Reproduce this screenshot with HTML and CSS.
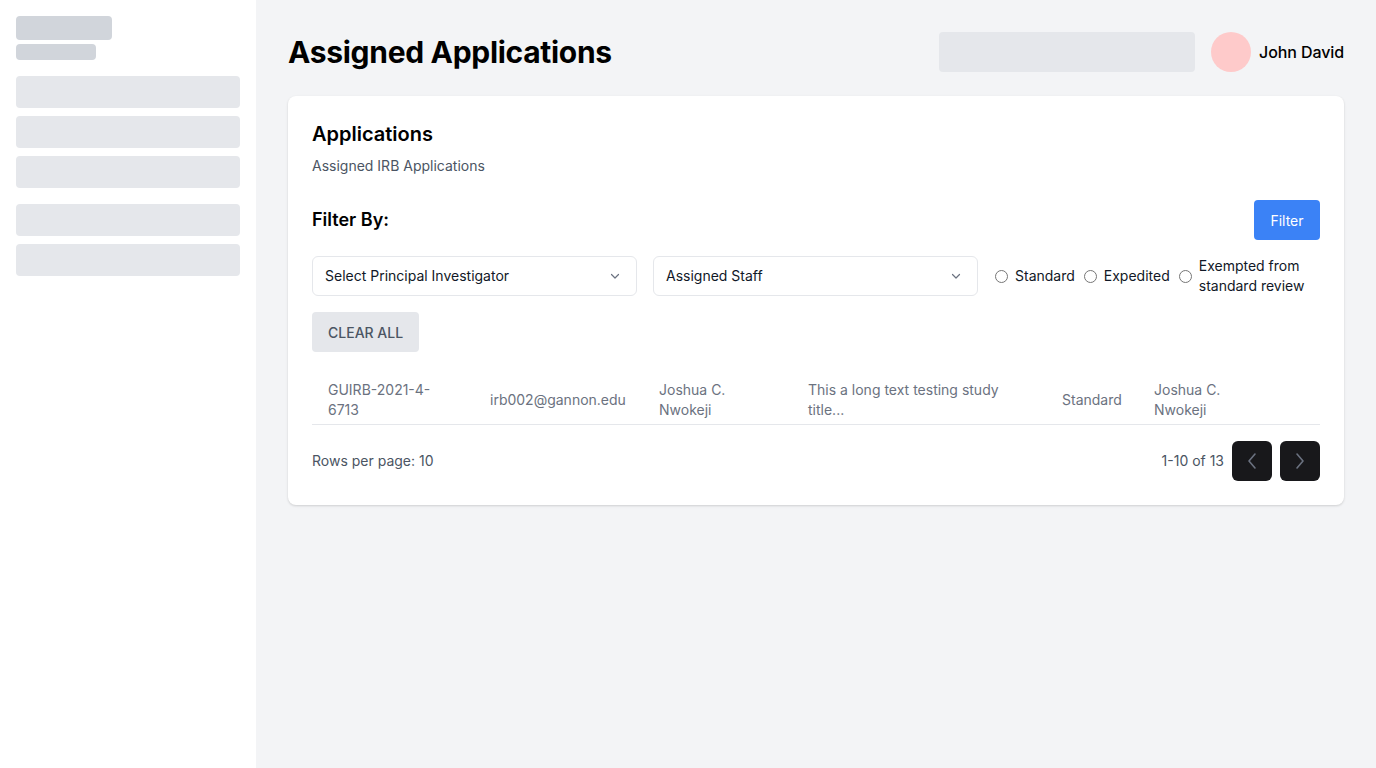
FILE: index.html
```html
<!DOCTYPE html>
<html lang="en">
<head>
<meta charset="utf-8">
<title>Assigned Applications</title>
<link rel="stylesheet" href="styles.css">
</head>
<body>
<div class="app">
  <aside class="sidebar">
    <div class="logo-main"></div>
    <div class="logo-sub"></div>
    <nav class="nav">
      <div class="nav-group">
        <div class="nav-item"></div>
        <div class="nav-item"></div>
        <div class="nav-item"></div>
      </div>
      <div class="nav-group">
        <div class="nav-item"></div>
        <div class="nav-item"></div>
      </div>
    </nav>
  </aside>
  <main class="main">
    <header class="topbar">
      <h1 class="page-title">Assigned Applications</h1>
      <div class="topbar-right">
        <div class="search-skel"></div>
        <div class="user">
          <div class="avatar"></div>
          <span class="user-name">John David</span>
        </div>
      </div>
    </header>
    <section class="card">
      <h2 class="card-title">Applications</h2>
      <p class="card-sub">Assigned IRB Applications</p>
      <div class="filter-head">
        <h3 class="filter-title">Filter By:</h3>
        <button class="btn-primary">Filter</button>
      </div>
      <div class="filter-row">
        <div class="select">
          <span>Select Principal Investigator</span>
          <svg class="chev" width="12" height="12" viewBox="0 0 12 12"><path d="M2.5 4.5 6 8l3.5-3.5" fill="none" stroke="#6b7280" stroke-width="1.2" stroke-linecap="round" stroke-linejoin="round"/></svg>
        </div>
        <div class="select">
          <span>Assigned Staff</span>
          <svg class="chev" width="12" height="12" viewBox="0 0 12 12"><path d="M2.5 4.5 6 8l3.5-3.5" fill="none" stroke="#6b7280" stroke-width="1.2" stroke-linecap="round" stroke-linejoin="round"/></svg>
        </div>
        <div class="radios">
          <label class="radio"><span class="radio-dot"></span><span>Standard</span></label>
          <label class="radio"><span class="radio-dot"></span><span>Expedited</span></label>
          <label class="radio"><span class="radio-dot"></span><span class="radio-long">Exempted from standard review</span></label>
        </div>
      </div>
      <button class="btn-clear">CLEAR ALL</button>
      <div class="table">
        <div class="row">
          <div class="cell c1"><span class="w1">GUIRB-2021-4-6713</span></div>
          <div class="cell c2"><span>irb002@gannon.edu</span></div>
          <div class="cell c3"><span class="wn">Joshua C. Nwokeji</span></div>
          <div class="cell c4"><span class="w4">This a long text testing study title...</span></div>
          <div class="cell c5"><span>Standard</span></div>
          <div class="cell c6"><span class="wn">Joshua C. Nwokeji</span></div>
        </div>
      </div>
      <div class="pager">
        <span class="rows-pp">Rows per page: 10</span>
        <div class="pager-right">
          <span class="range">1-10 of 13</span>
          <button class="pg-btn" aria-label="Previous">
            <svg width="12" height="18" viewBox="0 0 12 18"><path d="M9 2 3 9l6 7" fill="none" stroke="#6b7280" stroke-width="1.6" stroke-linecap="round" stroke-linejoin="round"/></svg>
          </button>
          <button class="pg-btn" aria-label="Next">
            <svg width="12" height="18" viewBox="0 0 12 18"><path d="M3 2l6 7-6 7" fill="none" stroke="#6b7280" stroke-width="1.6" stroke-linecap="round" stroke-linejoin="round"/></svg>
          </button>
        </div>
      </div>
    </section>
  </main>
</div>
</body>
</html>
```
FILE: styles.css
```css
* { box-sizing: border-box; }
html, body { margin: 0; padding: 0; }
body {
  font-family: Inter, "Noto Sans", "Liberation Sans", sans-serif;
  color: #111827;
  background: #f3f4f6;
}
.app { display: flex; min-height: 768px; }

.sidebar {
  width: 256px;
  flex-shrink: 0;
  background: #ffffff;
  padding: 16px;
  display: flex;
  flex-direction: column;
}
.logo-main { width: 96px; height: 24px; background: #d1d5db; border-radius: 4px; }
.logo-sub { width: 80px; height: 16px; background: #d1d5db; border-radius: 4px; margin-top: 4px; }
.nav { margin-top: 16px; display: flex; flex-direction: column; gap: 16px; }
.nav-group { display: flex; flex-direction: column; gap: 8px; }
.nav-item { height: 32px; background: #e5e7eb; border-radius: 4px; }

.main { flex: 1; padding: 32px; min-width: 0; }
.topbar { display: flex; align-items: center; justify-content: space-between; height: 40px; }
.page-title { margin: 0; font-size: 30px; font-weight: 700; line-height: 36px; color: #000; letter-spacing: -0.3px; }
.topbar-right { display: flex; align-items: center; gap: 16px; }
.search-skel { width: 256px; height: 40px; background: #e5e7eb; border-radius: 4px; }
.user { display: flex; align-items: center; gap: 8px; }
.avatar { width: 40px; height: 40px; border-radius: 50%; background: #fecaca; }
.user-name { font-size: 16px; font-weight: 500; color: #000; letter-spacing: -0.1px; }

.card {
  margin-top: 24px;
  background: #fff;
  border-radius: 8px;
  box-shadow: 0 1px 3px rgba(0,0,0,0.1), 0 1px 2px rgba(0,0,0,0.06);
  padding: 24px;
}
.card-title { margin: 0; font-size: 20px; line-height: 28px; font-weight: 600; color: #000; }
.card-sub { margin: 8px 0 0; font-size: 14px; line-height: 20px; color: #4b5563; }
.filter-head { margin-top: 24px; display: flex; align-items: center; justify-content: space-between; }
.filter-title { margin: 0; font-size: 18px; line-height: 28px; font-weight: 600; color: #000; }
.btn-primary {
  height: 40px; width: 66px;
  border: none; border-radius: 4px;
  background: #3b82f6; color: #fff;
  font-family: inherit; font-size: 14px;
}

.filter-row { margin-top: 16px; display: flex; align-items: center; gap: 16px; }
.select {
  width: 325px; height: 40px;
  flex-shrink: 0;
  border: 1px solid #e5e7eb;
  border-radius: 6px;
  display: flex; align-items: center; justify-content: space-between;
  padding: 0 15px 0 12px;
  font-size: 14px; line-height: 20px; color: #111827;
}
.chev { display: block; }
.radios { display: flex; align-items: center; gap: 8px; flex: 1; }
.radio { display: flex; align-items: center; gap: 7px; font-size: 14px; line-height: 20px; color: #111827; }
.radio-dot {
  width: 13px; height: 13px; flex-shrink: 0;
  border: 1px solid #767676; border-radius: 50%;
  margin-left: 1px;
}
.radio-long { max-width: 110px; }

.btn-clear {
  margin-top: 16px;
  display: block;
  height: 40px; padding: 0 16px;
  border: none; border-radius: 4px;
  background: #e5e7eb; color: #4b5563;
  font-family: inherit; font-size: 14px; font-weight: 500;
}

.table { margin-top: 20px; }
.row { display: flex; border-bottom: 1px solid #e5e7eb; padding: 8px 0 4px; }
.cell { padding: 0 16px; display: flex; align-items: center; font-size: 14px; line-height: 20px; color: #6b7280; }
.c1 { width: 162px; }
.c2 { width: 169px; }
.c3 { width: 149px; }
.c4 { width: 254px; }
.c5 { width: 92px; }
.c6 { width: 182px; }
.w1 { max-width: 120px; }
.wn { max-width: 90px; }
.w4 { max-width: 210px; }

.pager { margin-top: 16px; display: flex; align-items: center; justify-content: space-between; }
.rows-pp { font-size: 14px; line-height: 20px; color: #4b5563; }
.pager-right { display: flex; align-items: center; gap: 8px; }
.range { font-size: 14px; line-height: 20px; color: #4b5563; }
.pg-btn {
  width: 40px; height: 40px;
  border: none; border-radius: 6px;
  background: #18181b;
  display: flex; align-items: center; justify-content: center;
  padding: 0;
}
.pg-btn svg { display: block; }
```
